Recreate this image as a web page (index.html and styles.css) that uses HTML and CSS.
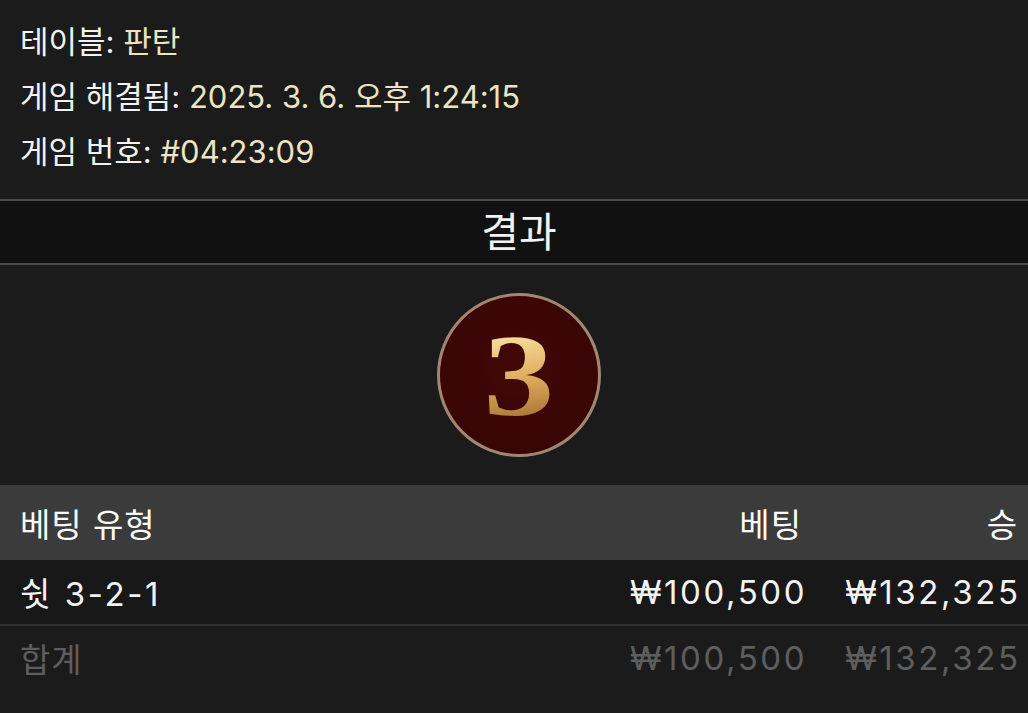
FILE: index.html
```html
<!DOCTYPE html>
<html lang="ko">
<head>
    <meta charset="UTF-8">
    <meta name="viewport" content="width=device-width, initial-scale=1.0">
    <title>게임 결과</title>
    <link rel="stylesheet" href="styles.css">
</head>
<body>
    <div class="info">
        <p>테이블: <span class="value">판탄</span></p>
        <p>게임 해결됨: <span class="value">2025. 3. 6. 오후 1:24:15</span></p>
        <p>게임 번호: <span class="value">#04:23:09</span></p>
    </div>

    <div class="result-title">결과</div>

    <div class="result-body">
        <div class="ball"><span>3</span></div>
    </div>

    <div class="bets">
        <div class="row head">
            <span class="type">베팅 유형</span>
            <span class="amt">베팅</span>
            <span class="win">승</span>
        </div>
        <div class="row">
            <span class="type num">쉿 3-2-1</span>
            <span class="amt num">₩100,500</span>
            <span class="win num">₩132,325</span>
        </div>
        <div class="row total">
            <span class="type">합계</span>
            <span class="amt num">₩100,500</span>
            <span class="win num">₩132,325</span>
        </div>
    </div>
</body>
</html>
```

FILE: styles.css
```css
body {
    margin: 0;
    background-color: #1b1b1b;
    color: #f2f2f2;
    font-family: Inter, "Noto Sans CJK KR", sans-serif;
    font-size: 31px;
}

.info {
    padding: 14px 20px 20px;
}

.info p {
    margin: 0;
    line-height: 55px;
}

.value {
    color: #ece4c2;
}

/* 결과 띠 */
.result-title {
    background-color: #111;
    border-top: 2px solid #4a4a4a;
    border-bottom: 2px solid #4a4a4a;
    height: 62px;
    line-height: 62px;
    text-align: center;
    font-size: 41px;
    padding-left: 10px;
}

.result-body {
    height: 220px;
    display: flex;
    align-items: center;
    justify-content: center;
    padding-left: 10px;
}

.ball {
    width: 158px;
    height: 158px;
    border-radius: 50%;
    border: 3px solid #a38670;
    background: radial-gradient(circle at 50% 45%, #420808, #350404);
    display: flex;
    align-items: center;
    justify-content: center;
}

.ball span {
    font-family: "Liberation Serif", serif;
    font-weight: bold;
    font-size: 116px;
    line-height: 1;
    margin-top: 2px;
    transform: scaleX(1.22);
    background: linear-gradient(170deg, #fde6a8 10%, #e0b060 50%, #9a6526 95%);
    -webkit-background-clip: text;
    background-clip: text;
    color: transparent;
}

/* 베팅 표 */
.row {
    display: flex;
    align-items: center;
    height: 64px;
    padding: 0 10px 0 20px;
    background-color: #181818;
    font-size: 33px;
    letter-spacing: 1px;
}

.row .num {
    letter-spacing: 2.6px;
}

.row .amt.num,
.row .win.num {
    margin-right: -2.6px;
}

.row.head {
    height: 75px;
    background-color: #3b3b3b;
    color: #fafafa;
}

.row.total {
    border-top: 2px solid #303030;
    color: #5e5e5e;
    background-color: #1b1b1b;
}

.type {
    flex: 1;
}

.amt {
    width: 200px;
    text-align: right;
}

.win {
    width: 216px;
    text-align: right;
}
```
